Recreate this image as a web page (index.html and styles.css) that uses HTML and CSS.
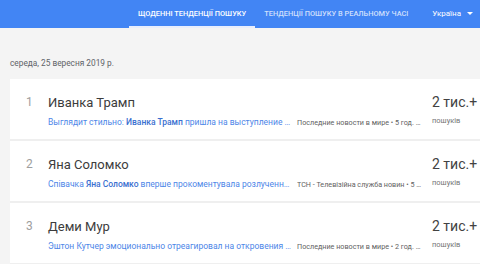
FILE: index.html
```html
<!DOCTYPE html>
<html>
<head>
	<title>Тенденції пошуку</title>
	<meta charset="utf-8">
	<link rel="stylesheet" href="styles.css">
</head>
<body>
    <header class="topbar">
        <nav class="tabs">
            <a class="tab active">Щоденні тенденції пошуку</a>
            <a class="tab">Тенденції пошуку в реальному часі</a>
        </nav>
        <div class="country">Україна <span class="arrow"></span></div>
    </header>

    <div class="date">середа, 25 вересня 2019 р.</div>

    <div class="card">
        <div class="row">
            <div class="num">1</div>
            <div class="main">
                <div class="title">Иванка Трамп</div>
                <div class="meta">
                    <span class="snippet">Выглядит стильно: <b>Иванка Трамп</b> пришла на выступление отца в ООН в платье</span>
                    <span class="source">Последние новости в мире • 5 год. тому</span>
                </div>
            </div>
            <div class="count">
                <div class="big">2 тис.+</div>
                <div class="small">пошуків</div>
            </div>
        </div>
        <div class="row">
            <div class="num">2</div>
            <div class="main">
                <div class="title">Яна Соломко</div>
                <div class="meta">
                    <span class="snippet">Співачка <b>Яна Соломко</b> вперше прокоментувала розлучення з чоловіком</span>
                    <span class="source">ТСН - Телевізійна служба новин • 5 год. тому</span>
                </div>
            </div>
            <div class="count">
                <div class="big">2 тис.+</div>
                <div class="small">пошуків</div>
            </div>
        </div>
        <div class="row">
            <div class="num">3</div>
            <div class="main">
                <div class="title">Деми Мур</div>
                <div class="meta">
                    <span class="snippet">Эштон Кутчер эмоционально отреагировал на откровения Деми Мур</span>
                    <span class="source">Последние новости в мире • 2 год. тому</span>
                </div>
            </div>
            <div class="count">
                <div class="big">2 тис.+</div>
                <div class="small">пошуків</div>
            </div>
        </div>
    </div>
</body>
</html>
```

FILE: styles.css
```css
body {
    margin: 0;
    padding: 0;
    font-family: Roboto, "Liberation Sans", sans-serif;
    background-color: #f4f4f4;
    color: #212121;
    overflow: hidden;
}
.topbar {
    display: flex;
    align-items: stretch;
    height: 28px;
    background-color: #4285f4;
    color: #fff;
}
.tabs {
    display: flex;
    margin-left: 129px;
}
.tab {
    display: flex;
    align-items: center;
    padding: 0 9px;
    font-size: 7.4px;
    font-weight: 500;
    text-transform: uppercase;
    color: rgba(255, 255, 255, 0.75);
    border-bottom: 2px solid transparent;
    box-sizing: border-box;
}
.tab.active {
    color: #fff;
    border-bottom-color: #e8eefc;
}
.country {
    display: flex;
    align-items: center;
    margin-left: auto;
    padding-right: 7px;
    font-size: 8px;
    padding-bottom: 1px;
}
.arrow {
    margin-left: 6px;
    width: 0;
    height: 0;
    border-left: 3px solid transparent;
    border-right: 3px solid transparent;
    border-top: 3px solid #fff;
}
.date {
    margin: 30px 0 0 10px;
    font-size: 8.3px;
    color: #5f6368;
    height: 12px;
}
.card {
    margin: 9px 0 0 10px;
    background-color: #fff;
}
.row {
    display: flex;
    height: 62px;
    border-bottom: 2px solid #efefef;
    box-sizing: border-box;
}
.num {
    width: 22px;
    padding: 16px 0 0 16px;
    font-size: 12px;
    color: #9e9e9e;
}
.main {
    width: 384px;
    min-width: 0;
    padding-top: 16px;
}
.title {
    font-size: 13px;
    line-height: 15px;
    color: #3c3c3c;
}
.meta {
    display: flex;
    gap: 5px;
    margin-top: 7px;
    align-items: baseline;
}
.snippet {
    flex: none;
    width: 244px;
    white-space: nowrap;
    overflow: hidden;
    text-overflow: ellipsis;
    font-size: 8.5px;
    line-height: 11px;
    color: #4d86e8;
}
.snippet b {
    font-weight: 500;
    color: #3a6fd0;
}
.source {
    flex: none;
    width: 125px;
    white-space: nowrap;
    overflow: hidden;
    text-overflow: ellipsis;
    font-size: 7.2px;
    line-height: 11px;
    color: #616161;
}
.count {
    padding-top: 15px;
}
.big {
    font-size: 14px;
    line-height: 17px;
    color: #424242;
}
.small {
    margin-top: 4px;
    font-size: 7.5px;
    line-height: 11px;
    color: #757575;
}
```
